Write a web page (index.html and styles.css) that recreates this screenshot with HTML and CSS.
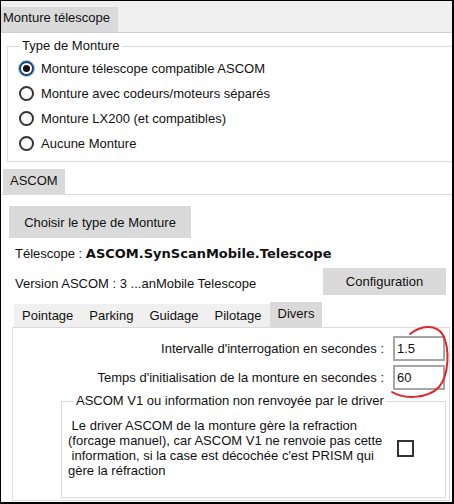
FILE: index.html
```html
<!DOCTYPE html>
<html lang="fr">
<head>
    <meta charset="UTF-8">
    <title>Monture télescope</title>
    <link rel="stylesheet" href="styles.css">
</head>
<body>
    <div class="window">
        <!-- onglet principal -->
        <div class="tabbar-top">
            <div class="tab-main">Monture télescope</div>
        </div>
        <div class="panel-top">
            <div class="group group-type">
                <span class="group-title">Type de Monture</span>
                <div class="radio-row"><span class="radio checked"></span>Monture télescope compatible ASCOM</div>
                <div class="radio-row"><span class="radio"></span>Monture avec codeurs/moteurs séparés</div>
                <div class="radio-row"><span class="radio"></span>Monture LX200 (et compatibles)</div>
                <div class="radio-row"><span class="radio"></span>Aucune Monture</div>
            </div>
        </div>

        <!-- onglet ASCOM -->
        <div class="tabbar-ascom">
            <div class="tab-ascom">ASCOM</div>
        </div>
        <div class="panel-ascom">
            <button class="btn btn-choose">Choisir le type de Monture</button>
            <div class="info-line">Télescope : <b class="driver">ASCOM.SynScanMobile.Telescope</b></div>
            <div class="version-row">
                <span class="version">Version ASCOM : 3 ...anMobile Telescope</span>
                <button class="btn btn-config">Configuration</button>
            </div>

            <div class="subtabs">
                <div class="subtab">Pointage</div>
                <div class="subtab">Parking</div>
                <div class="subtab">Guidage</div>
                <div class="subtab">Pilotage</div>
                <div class="subtab subtab-active">Divers</div>
            </div>
            <div class="subpage">
                <div class="field-row">
                    <span>Intervalle d'interrogation en secondes :</span>
                    <input class="field-input" type="text" value="1.5">
                </div>
                <div class="field-row">
                    <span>Temps d'initialisation de la monture en secondes :</span>
                    <input class="field-input" type="text" value="60">
                </div>
                <div class="group group-v1">
                    <span class="group-title">ASCOM V1 ou information non renvoyée par le driver</span>
                    <div class="v1-body">
                        <p class="v1-text"> Le driver ASCOM de la monture gère la refraction
(forcage manuel), car ASCOM V1 ne renvoie pas cette
 information, si la case est décochée c'est PRISM qui
gère la réfraction</p>
                        <span class="checkbox"></span>
                    </div>
                </div>
            </div>
        </div>

        <!-- annotation rouge -->
        <svg class="annotation" width="454" height="504" viewBox="0 0 454 504">
            <path d="M410 334 C420 326, 436 323, 443 335 C450 349, 449 375, 439 387 C429 398, 405 400, 392 392" fill="none" stroke="#e0262a" stroke-width="2" stroke-linecap="round"/>
        </svg>
    </div>
</body>
</html>
```

FILE: styles.css
```css
/* base */
* {
    box-sizing: border-box;
}
body {
    margin: 0;
    font-family: "Liberation Sans", Arial, sans-serif;
    font-size: 13px;
    color: #111;
    background: #fff;
}

.window {
    position: relative;
    width: 454px;
    height: 504px;
    border: 1px solid #000;
    border-right-width: 2px;
    border-bottom-width: 2px;
    overflow: hidden;
    background: #fff;
}

/* onglet du haut */
.tabbar-top {
    height: 32px;
    background: #f0f0f0;
    border-bottom: 1px solid #cfcfcf;
    display: flex;
    align-items: flex-end;
}
.tab-main {
    width: 117px;
    height: 25px;
    line-height: 22px;
    padding-left: 2px;
    background: #dadada;
}

.panel-top {
    padding: 13px 0 0 6px;
}

/* cadres */
.group {
    position: relative;
    border: 1px solid #dcdcdc;
}
.group-title {
    position: absolute;
    top: -9px;
    left: 12px;
    padding: 0 2px;
    line-height: 16px;
    background: #fff;
    white-space: nowrap;
}
.group-type {
    height: 116px;
    border-right: none;
    padding: 9px 0 0 11px;
}

/* boutons radio */
.radio-row {
    height: 25px;
    display: flex;
    align-items: center;
    gap: 7px;
}
.radio {
    width: 15px;
    height: 15px;
    border: 2px solid #333;
    border-radius: 50%;
    display: flex;
    align-items: center;
    justify-content: center;
}
.radio.checked {
    border-color: #163f73;
    box-shadow: 0 0 0 1px rgba(0, 120, 215, 0.45);
}
.radio.checked::after {
    content: "";
    width: 7px;
    height: 7px;
    border-radius: 50%;
    background: #111;
}

/* onglet ASCOM */
.tabbar-ascom {
    height: 33px;
    border-bottom: 1px solid #dadada;
    display: flex;
    align-items: flex-end;
    padding-left: 2px;
}
.tab-ascom {
    width: 62px;
    height: 25px;
    line-height: 24px;
    padding-left: 7px;
    background: #dadada;
}

.panel-ascom {
    padding-top: 11px;
}

.btn {
    font-family: inherit;
    font-size: 13px;
    color: #111;
    background: #dadada;
    border: none;
    padding: 0;
}
.btn-choose {
    display: block;
    margin-left: 8px;
    width: 182px;
    height: 32px;
}

.info-line {
    margin-top: 8px;
    padding-left: 14px;
    line-height: 15px;
}
.driver {
    font-family: "DejaVu Sans", Verdana, sans-serif;
    font-size: 13px;
    font-weight: bold;
}

.version-row {
    margin-top: 7px;
    height: 27px;
    padding: 0 6px 0 14px;
    display: flex;
    align-items: center;
    justify-content: space-between;
}
.version {
    padding-top: 3px;
}
.btn-config {
    width: 123px;
    height: 27px;
}

/* sous-onglets */
.subtabs {
    margin: 7px 0 0 11px;
    padding-left: 2px;
    height: 25px;
    display: flex;
    align-items: flex-end;
}
.subtab {
    height: 23px;
    line-height: 23px;
    padding: 0 8px;
    background: #f0f0f0;
}
.subtab-active {
    height: 25px;
    background: #dadada;
}

.subpage {
    margin: 0 2px 0 11px;
    height: 174px;
    border: 1px solid #dcdcdc;
    padding: 8px 4px 0 0;
}

.field-row {
    height: 25px;
    display: flex;
    justify-content: flex-end;
    align-items: center;
    gap: 9px;
}
.field-row + .field-row {
    margin-top: 4px;
}
.field-input {
    width: 52px;
    height: 25px;
    border: 2px solid #a6a6a6;
    padding: 0 2px;
    font-family: inherit;
    font-size: 13px;
    color: #111;
    outline: none;
}

.group-v1 {
    margin: 11px 0 0 48px;
    width: 385px;
    height: 97px;
}
.v1-body {
    display: flex;
    align-items: center;
    padding: 16px 0 0 6px;
}
.v1-text {
    margin: 0;
    width: 329px;
    line-height: 15px;
    white-space: pre;
}
.checkbox {
    width: 17px;
    height: 17px;
    flex-shrink: 0;
    border: 2px solid #333;
    background: #fff;
}

/* trait rouge */
.annotation {
    position: absolute;
    top: -1px;
    left: -1px;
    pointer-events: none;
}
```
